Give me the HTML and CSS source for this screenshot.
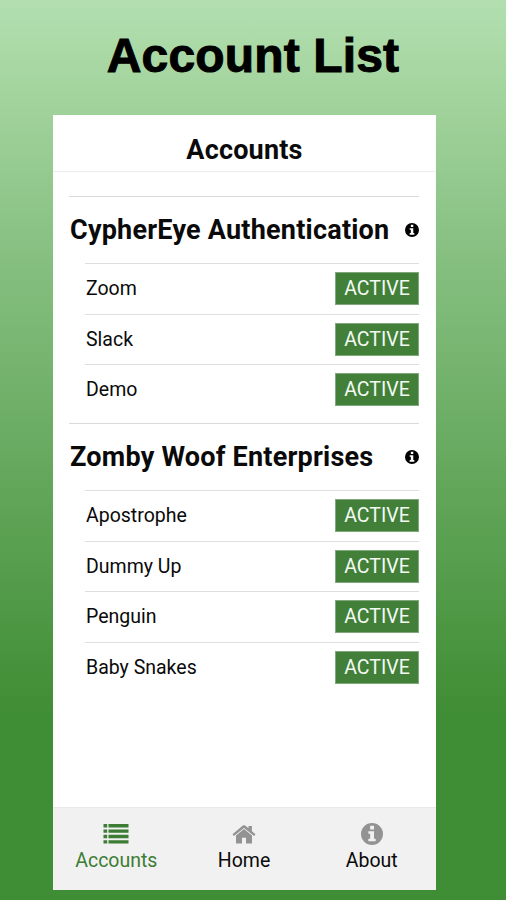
FILE: index.html
```
<!DOCTYPE html>
<html lang="en">
<head>
<meta charset="utf-8">
<title>Account List</title>
<link rel="stylesheet" href="styles.css">
</head>
<body>
<svg class="defs" width="0" height="0" aria-hidden="true">
  <symbol id="info" viewBox="0 0 24 24"><path fill-rule="evenodd" d="M12 0a12 12 0 1 0 0 24a12 12 0 0 0 0-24zM10 3h4.2v4H10zM8 9h6.2v8.3H16V20H8v-2.700h2v-5.600H8z"/></symbol>
</svg>
<h1 class="title">Account List</h1>
<main class="phone">
  <header class="bar">Accounts</header>
  <div class="content">
    <section class="group">
      <h2 class="group-head"><span>CypherEye Authentication</span><svg class="info"><use href="#info"/></svg></h2>
      <ul class="rows">
        <li class="row"><span>Zoom</span><b class="tag">ACTIVE</b></li>
        <li class="row"><span>Slack</span><b class="tag">ACTIVE</b></li>
        <li class="row"><span>Demo</span><b class="tag">ACTIVE</b></li>
      </ul>
    </section>
    <section class="group">
      <h2 class="group-head"><span>Zomby Woof Enterprises</span><svg class="info"><use href="#info"/></svg></h2>
      <ul class="rows">
        <li class="row"><span>Apostrophe</span><b class="tag">ACTIVE</b></li>
        <li class="row"><span>Dummy Up</span><b class="tag">ACTIVE</b></li>
        <li class="row"><span>Penguin</span><b class="tag">ACTIVE</b></li>
        <li class="row"><span>Baby Snakes</span><b class="tag">ACTIVE</b></li>
      </ul>
    </section>
  </div>
  <nav class="tabs">
    <a class="tab current"><svg class="icon" viewBox="0 0 26 22"><path d="M.5 1h3.700v3.400H.5zM5.500 1h20v3.400h-20zM.5 6.400h3.700v3.400H.5zM5.500 6.400h20v3.400h-20zM.5 11.800h3.700v3.400H.5zM5.500 11.800h20v3.400h-20zM.5 17.200h3.700v3.400H.5zM5.500 17.200h20v3.400h-20z"/></svg><span>Accounts</span></a>
    <a class="tab"><svg class="icon" viewBox="0 0 26 22"><path d="M11.800 2.600Q13 1.700 14.200 2.600L17.500 5.300V3h3.400v5.200l3.600 3-1.400 1.800L13 4.900 2.900 13l-1.400-1.800zM13 6.100l8 6.500v7.900h-6v-5.700h-4v5.700H5v-7.900z"/></svg><span>Home</span></a>
    <a class="tab"><svg class="icon"><use href="#info"/></svg><span>About</span></a>
  </nav>
</main>
</body>
</html>
```
FILE: styles.css
```
* { box-sizing: border-box; }
body {
  margin: 0;
  height: 900px;
  overflow: hidden;
  font-family: Roboto, "Liberation Sans", sans-serif;
  color: #0a0a0a;
  background: linear-gradient(#b3dfb0 0, #a2d39c 100px, #8bc386 225px, #3f8d34 715px);
}
.defs { display: block; height: 0; }
.title {
  margin: 0;
  height: 115px;
  padding-top: 28px;
  text-align: center;
  font: bold 48px/56px "Liberation Sans", Arial, sans-serif;
  letter-spacing: 0.15px;
  color: #000;
  -webkit-text-stroke: 1px #000;
}
.phone {
  display: flex;
  flex-direction: column;
  width: 383px;
  height: 775px;
  margin-left: 53px;
  background: #fff;
}
.bar {
  height: 57px;
  padding-top: 19px;
  border-bottom: 1px solid #ebeeee;
  text-align: center;
  font-size: 27px;
  letter-spacing: 0.2px;
  line-height: 32px;
  font-weight: 700;
}
.content { flex: 1; padding: 24px 17px 0 16px; }
.group { border-top: 1.500px solid #dadada; height: 227px; }
.group-head {
  display: flex;
  align-items: center;
  justify-content: space-between;
  height: 66px;
  margin: 0;
  padding-left: 1px;
  font-size: 27px;
  letter-spacing: 0.22px;
  font-weight: 700;
  white-space: nowrap;
}
.info { width: 14px; height: 14px; }
.rows { list-style: none; margin: 0 0 0 16px; padding: 0; }
.row {
  display: flex;
  align-items: center;
  justify-content: space-between;
  height: 50.500px;
  border-top: 1.500px solid #dfdfdf;
  font-size: 19.500px;
}
.row span { padding-left: 1px; }
.tag {
  width: 84px;
  height: 33px;
  border: 1px solid #82a97d;
  background: #42803a;
  color: #f4faf3;
  font-weight: 400;
  line-height: 32px;
  text-align: center;
}
.tabs {
  display: flex;
  height: 83px;
  background: #f1f1f1;
  border-top: 1px solid #e9e9e9;
}
.tab {
  flex: 1;
  display: flex;
  flex-direction: column;
  align-items: center;
  padding: 15px 1px 0 0;
  font-size: 19.500px;
  line-height: 24px;
}
.icon { width: 26px; height: 22px; margin-bottom: 4px; fill: #939393; }
.current { color: #3c7c34; }
.current .icon { fill: #3c7c34; }
```
